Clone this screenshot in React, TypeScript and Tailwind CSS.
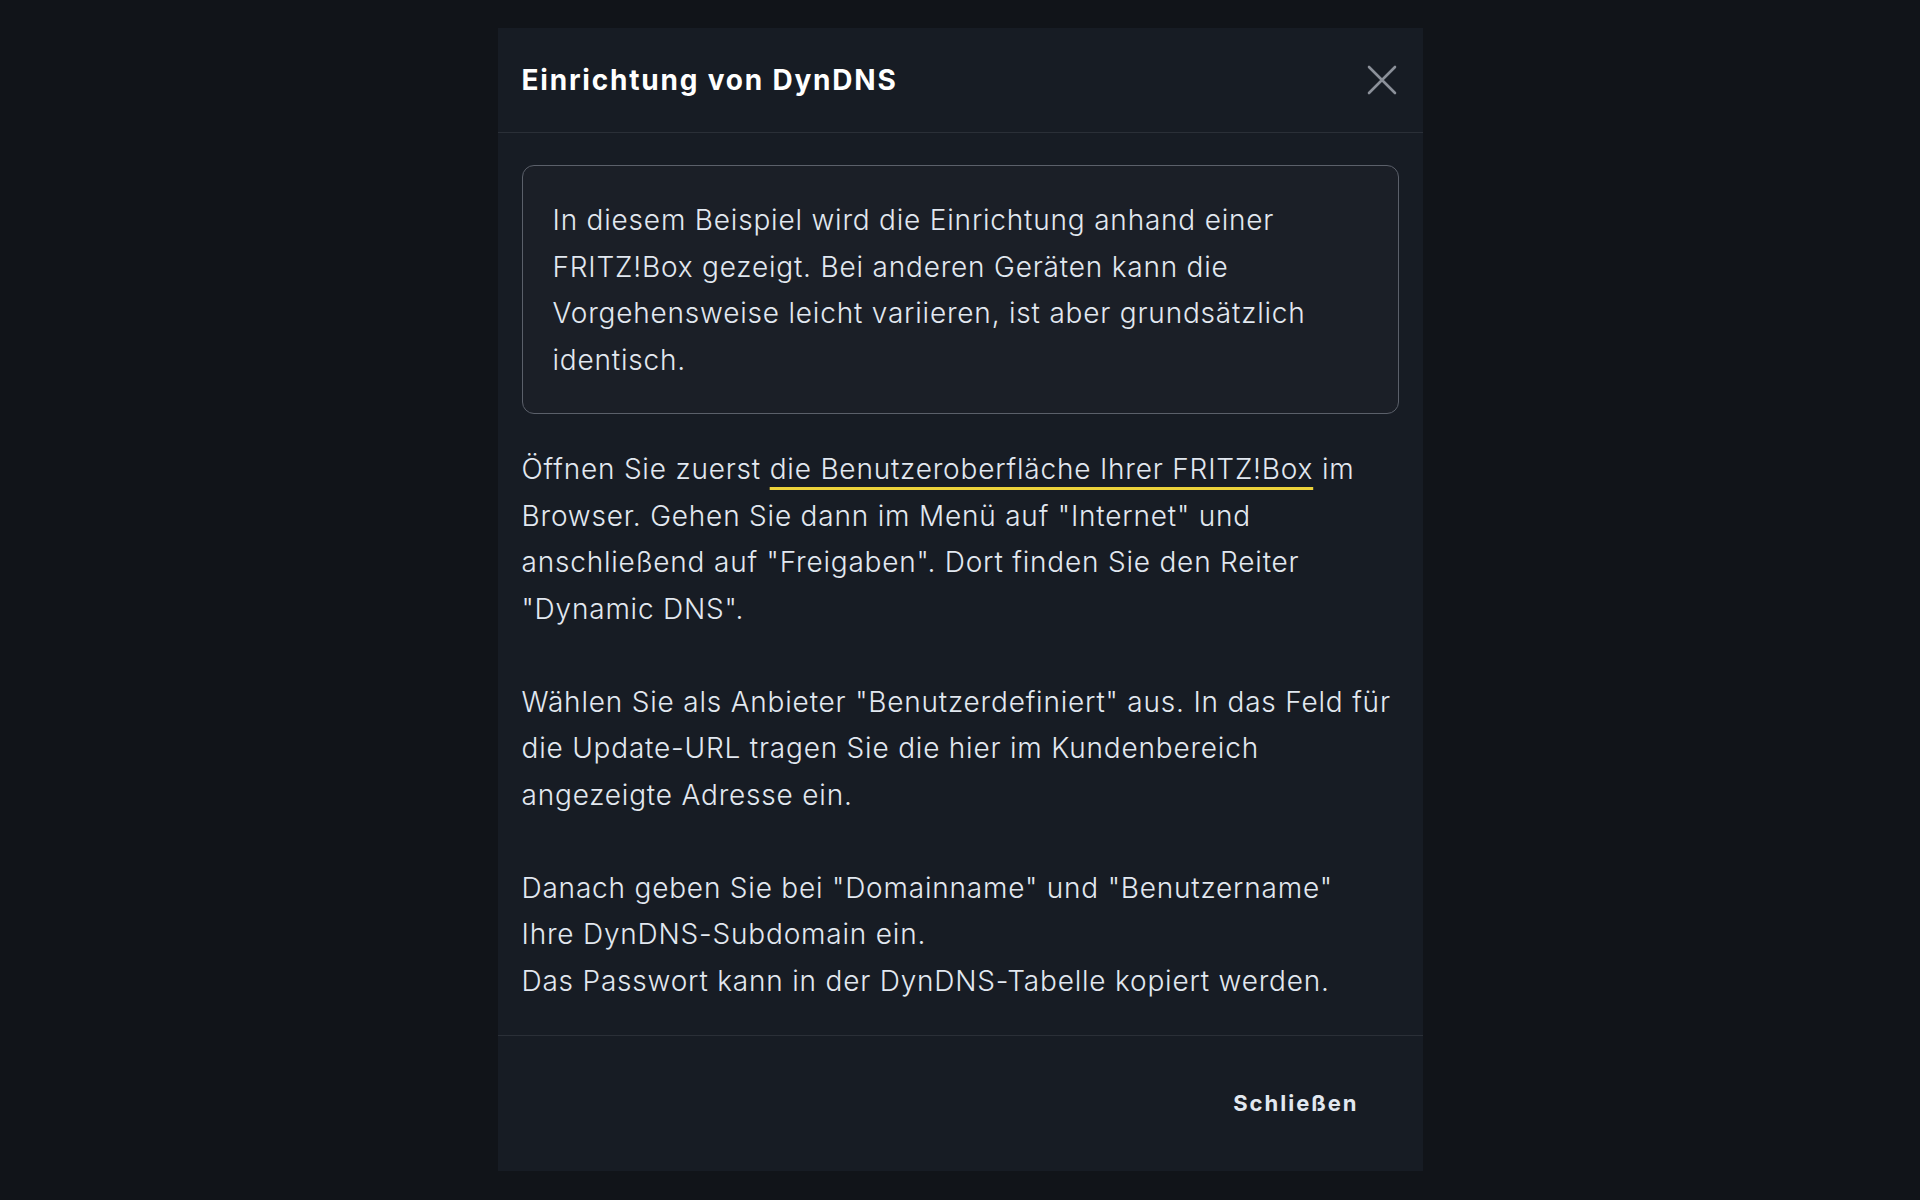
import React from 'react';

const App: React.FC = () => {
  return (
    <div
      className="min-h-screen w-full bg-[#111419] flex justify-center py-[28px]"
      style={{ fontFamily: 'Inter, "Noto Sans", sans-serif' }}
    >
      <div className="w-[925px] h-[1143px] bg-[#171c24] flex flex-col">
        <div className="h-[105px] flex items-center justify-between px-6 border-b border-[#2a2f37]">
          <h2 className="text-[28px] font-bold text-white tracking-[1.8px]">
            Einrichtung von DynDNS
          </h2>
          <button className="text-[#8b9099] mr-[2px]" aria-label="Schließen">
            <svg width="30" height="30" viewBox="0 0 30 30" fill="none">
              <path
                d="M2 2 L28 28 M28 2 L2 28"
                stroke="currentColor"
                strokeWidth="2.6"
                strokeLinecap="round"
              />
            </svg>
          </button>
        </div>

        <div className="flex-1 px-6 pt-8 pb-[31px] text-[28px] font-light leading-[46.5px] tracking-[0.8px] text-[#e2e8f0]">
          <div className="rounded-xl border border-[#5b606a] bg-[#1b1f27] px-[30px] pt-[31px] pb-[30px]">
            In diesem Beispiel wird die Einrichtung anhand einer FRITZ!Box gezeigt. Bei anderen
            Geräten kann die Vorgehensweise leicht variieren, ist aber grundsätzlich identisch.
          </div>
          <p className="mt-8">
            Öffnen Sie zuerst{' '}
            <a
              href="#"
              className="underline decoration-[#ecd23a] decoration-[3px] underline-offset-[8px]"
            >
              die Benutzeroberfläche Ihrer FRITZ!Box
            </a>{' '}
            im Browser. Gehen Sie dann im Menü auf "Internet" und anschließend auf "Freigaben".
            Dort finden Sie den Reiter "Dynamic DNS".
            <br />
            <br />
            Wählen Sie als Anbieter "Benutzerdefiniert" aus. In das Feld für die Update-URL
            tragen Sie die hier im Kundenbereich angezeigte Adresse ein.
            <br />
            <br />
            Danach geben Sie bei "Domainname" und "Benutzername"
            <br />
            Ihre DynDNS-Subdomain ein.
            <br />
            Das Passwort kann in der DynDNS-Tabelle kopiert werden.
          </p>
        </div>

        <div className="h-[136px] border-t border-[#2a2f37] flex items-center justify-end px-6">
          <button className="px-10 py-3 text-[22px] font-bold tracking-[2px] text-[#e2e8f0]">
            Schließen
          </button>
        </div>
      </div>
    </div>
  );
};

export default App;
